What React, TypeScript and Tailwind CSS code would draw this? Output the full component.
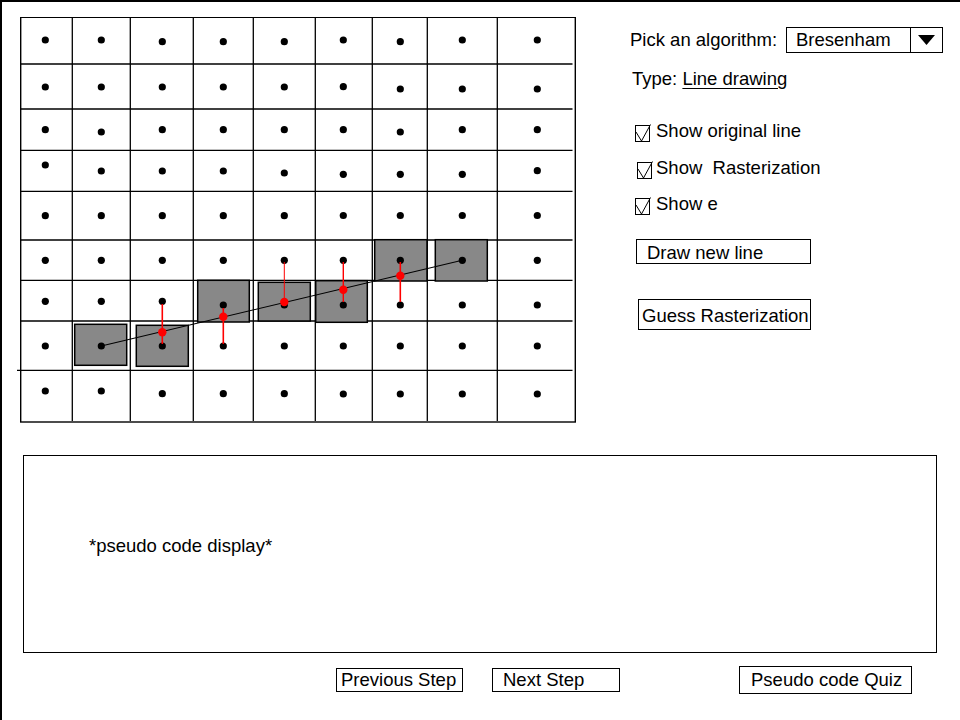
import React from "react";

const COLS = [45.3, 101.3, 162.3, 223.3, 284.3, 343.3, 400.3, 462.3, 537.3];
const ROWS: number[][] = [
  [40, 40, 41.7, 41.7, 41.7, 40, 41.7, 40, 40],
  [87, 87, 87, 87, 87, 86.7, 89, 89, 89],
  [129.7, 132, 129.7, 129.7, 129.7, 129.7, 132, 129.7, 129.7],
  [165, 171, 171, 171, 173, 174.3, 174.3, 174.3, 170.7],
  [215.7, 215.7, 215.7, 215.7, 215.7, 215.5, 215.5, 215.5, 215.5],
  [260.3, 260.3, 260.3, 260.3, 260.3, 260.3, 260.3, 260.3, 260.3],
  [301.3, 301.3, 301.3, 305, 305, 305, 305, 305, 305],
  [346, 346, 346, 346, 346, 346, 346, 346, 346],
  [391, 391, 393.7, 393.7, 393.7, 394, 394, 394, 394],
];
const VLINES = [72.3, 130.3, 193.3, 253.3, 315.3, 372.3, 427.3, 497.3];
const HLINES = [64, 109, 150.3, 191.3, 240, 280.3, 321, 370.3];
const SQUARES = [
  [74.7, 324.3, 52, 41],
  [136.3, 325.3, 52, 41],
  [197.7, 280.3, 51.6, 41.7],
  [258.3, 282.3, 52, 38.7],
  [315.7, 280.7, 51.6, 41.6],
  [374.7, 239.7, 52.3, 41.3],
  [435.3, 239.7, 52, 41.3],
];
const REDS = [
  { x: 162.3, y1: 304, y2: 344, d: 332.3, w: 1.6 },
  { x: 223.3, y1: 308, y2: 344, d: 316.7, w: 1.6 },
  { x: 284.3, y1: 262, y2: 302, d: 302, w: 1 },
  { x: 343.3, y1: 262, y2: 302, d: 289.7, w: 1.4 },
  { x: 400.3, y1: 262, y2: 302, d: 275.7, w: 1.6 },
];

function Grid() {
  return (
    <svg width={560} height={408} viewBox="17 17 560 408" className="block shrink-0">
      <rect x={20.7} y={17.3} width={554.6} height={404.7} fill="white" stroke="black" strokeWidth={1.4} />
      {VLINES.map((x, i) => (
        <line key={"v" + i} x1={x} y1={17.3} x2={x} y2={421} stroke="black" strokeWidth={1.3} />
      ))}
      {HLINES.map((y, i) => (
        <line key={"h" + i} x1={i === 7 ? 17 : 20.7} y1={y} x2={572.5} y2={y} stroke="black" strokeWidth={1.3} />
      ))}
      {SQUARES.map(([x, y, w, h], i) => (
        <rect key={"s" + i} x={x} y={y} width={w} height={h} fill="#888888" stroke="black" strokeWidth={1.5} />
      ))}
      <line x1={101.3} y1={346} x2={462.3} y2={260.3} stroke="black" strokeWidth={1.1} />
      {ROWS.map((r, ri) =>
        r.map((y, ci) => <circle key={ri + "-" + ci} cx={COLS[ci]} cy={y} r={3.6} fill="black" />)
      )}
      {REDS.map((r, i) => (
        <g key={"r" + i}>
          <line x1={r.x} y1={r.y1} x2={r.x} y2={r.y2} stroke="#ff0000" strokeWidth={r.w} />
          <circle cx={r.x} cy={r.d} r={4.2} fill="#ff0000" />
        </g>
      ))}
    </svg>
  );
}

function Check({ className }: { className: string }) {
  return (
    <svg width={17} height={19} viewBox="0 0 17 19" className={className}>
      <rect x={0.5} y={2.5} width={14} height={16} fill="white" stroke="black" strokeWidth={1} />
      <polyline points="1,9 6.5,18 15.5,1.5" fill="none" stroke="black" strokeWidth={1} />
    </svg>
  );
}

export default function App() {
  return (
    <div className="w-[960px] h-[720px] overflow-hidden bg-white border-l-2 border-t-2 border-black font-['Liberation_Sans',Arial,sans-serif] text-[18.5px] text-black flex flex-col">
      <div className="flex pt-[15px] pl-[15px]">
        <Grid />
        <div className="ml-[51px] flex flex-col">
          <div className="mt-[10px] flex items-center h-[26px]">
            <span className="w-[158px] pl-[2px] leading-[22px]">Pick an algorithm:</span>
            <div className="w-[157px] h-[26px] border border-black flex">
              <div className="w-[124px] pl-[9px] flex items-center border-r border-black leading-[22px]">Bresenham</div>
              <div className="flex-1 flex items-center justify-center pr-[1px]">
                <svg width={17} height={10} viewBox="0 0 17 10">
                  <polygon points="0,0 17,0 8.5,10" fill="black" />
                </svg>
              </div>
            </div>
          </div>
          <div className="mt-[15px] pl-[4px] leading-[22px]">
            Type: <span className="underline underline-offset-[3px]">Line drawing</span>
          </div>
          <div className="mt-[30px] h-[22px] flex items-center">
            <Check className="ml-[7px] mt-[3px]" />
            <span className="ml-[4px] leading-[22px]">Show original line</span>
          </div>
          <div className="mt-[15px] h-[22px] flex items-center">
            <Check className="ml-[9px] mt-[3px]" />
            <span className="ml-[2px] leading-[22px] whitespace-pre">Show  Rasterization</span>
          </div>
          <div className="mt-[14px] h-[22px] flex items-center">
            <Check className="ml-[7px] mt-[3px]" />
            <span className="ml-[4px] leading-[22px]">Show e</span>
          </div>
          <div className="mt-[24px] ml-[8px] w-[175px] h-[25px] border border-black flex items-center pl-[10px] pt-[3px] leading-[22px]">
            Draw new line
          </div>
          <div className="mt-[35px] ml-[10px] w-[173px] h-[31px] border border-black flex items-center pl-[3px] pt-[3px] leading-[22px] whitespace-nowrap">
            Guess Rasterization
          </div>
        </div>
      </div>
      <div className="mt-[30px] ml-[21px] w-[914px] h-[198px] border border-black pl-[65px] pt-[79px] leading-[22px]">
        *pseudo code display*
      </div>
      <div className="flex items-start">
        <div className="mt-[15px] ml-[334px] w-[127px] h-[24px] border border-black flex items-center pl-[4px] leading-[22px] whitespace-nowrap">
          Previous Step
        </div>
        <div className="mt-[15px] ml-[29px] w-[128px] h-[24px] border border-black flex items-center pl-[10px] leading-[22px]">
          Next Step
        </div>
        <div className="mt-[13px] ml-[119px] w-[173px] h-[28px] border border-black flex items-center pl-[11px] leading-[22px] whitespace-nowrap">
          Pseudo code Quiz
        </div>
      </div>
    </div>
  );
}
